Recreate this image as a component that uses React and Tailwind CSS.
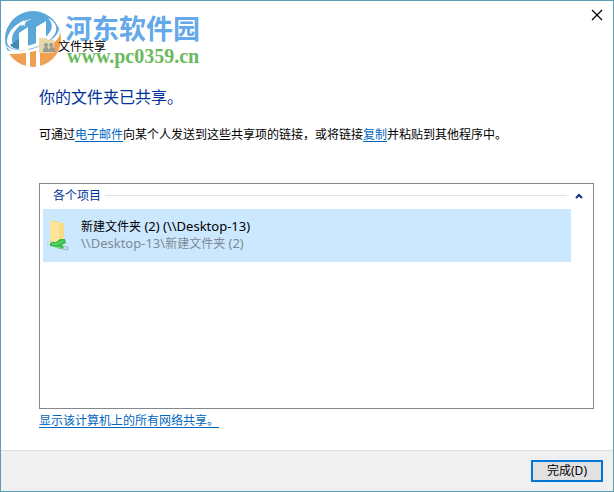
import React from 'react';

function Watermark() {
  return (
    <div className="pointer-events-none absolute left-px top-[7px] flex gap-[3px]">
      <svg className="size-[60px] shrink-0" viewBox="0 0 60 60" aria-hidden="true">
        <defs>
          <clipPath id="upper">
            <path d="M0 0H47C53 9 58 16 59 25C46 39 26 46 3 42Z" />
          </clipPath>
          <clipPath id="lower">
            <path d="M7 46C28 47 46 39 60 24V60H0Z" />
          </clipPath>
        </defs>
        <circle cx="31" cy="31" r="28" fill="#5aa7da" clipPath="url(#upper)" />
        <circle cx="31" cy="31" r="28" fill="#efa052" clipPath="url(#lower)" />
        <path d="M17 25 26 19V42H17ZM34 19 44 13V36H34Z" fill="#fff" />
        <path d="M24 44h4v16h-4zm10-3h4v19h-4z" fill="#fff" />
        <path d="M30 11C14 13 5 24 5 34C6 44 27 44 43 35C57 27 58 16 46 10C53 17 50 25 40 32C27 40 11 41 10 33C9 24 18 15 30 11Z" fill="#fff" />
        <path d="M4 37C11 45 30 44 46 34C54 29 57 24 57 20C61 30 51 36 42 40C26 47 6 46 4 37Z" fill="#fff" />
        <path d="M8 37 17 31V41Q11 41 8 37Z" fill="#3e88b8" />
        <path d="m21 12 1 2 2.4.3-1.8 1.6.5 2.3-2.1-1.2-2.1 1.2.5-2.3-1.8-1.6 2.4-.3Z" fill="#fff" />
        <path d="M37 30h7l2 2h6v13H37Z" fill="#e6d5a3" fillOpacity=".92" />
        <circle cx="44" cy="37" r="2" fill="#949996" />
        <circle cx="49" cy="37" r="2" fill="#949996" />
        <path d="M41 44q0-5 3-5t3 5zm6 0q0-5 3-5t3 5z" fill="#949996" />
      </svg>
      <div className="flex flex-col whitespace-nowrap pt-1">
        <span className="font-['Noto_Sans_CJK_SC',sans-serif] text-[27px] font-bold leading-8 text-[#65a9e8]">河东软件园</span>
        <span className="pl-0.5 font-['Liberation_Serif',serif] text-[20px] font-bold leading-6 text-[#6ab95b]">www.pc0359.cn</span>
      </div>
    </div>
  );
}

function FolderIcon() {
  return (
    <svg className="h-8 w-6 shrink-0" viewBox="0 0 24 32" aria-hidden="true">
      <path d="M3 2h8l1 2h5v21H3Z" fill="#f5d477" />
      <path d="M3 2l9 2v22l-9-3Z" fill="#ffe597" />
      <path d="M12 4h5v21h-5Z" fill="#f8dc88" />
      <path d="M0 23l5-1 3 2-3 2-5-1Z" fill="#e8eeee" stroke="#a9b6bb" strokeWidth=".5" />
      <path d="m15 27 6 1v3l-6-1Z" fill="#d5dde0" stroke="#89979d" strokeWidth=".6" />
      <path d="M3 24q3-2 6-1l4-3h5l1 4-4 2 2 3q-5 2-9-1l-5-1Z" fill="#35c04b" />
      <path d="m5 25 5 0 6-3M8 28l6 1" fill="none" stroke="#85dc8b" />
    </svg>
  );
}

const link = 'text-[#0066bf] underline underline-offset-2';

export default function App() {
  return (
    <div className="relative flex min-h-screen flex-col border border-[#5b9db3] bg-white font-['Noto_Sans','Noto_Sans_CJK_SC',sans-serif] text-[12px] leading-4 text-black">
      <Watermark />
      <header className="relative flex justify-between">
        <h1 className="pl-[57px] pt-[38px]">文件共享</h1>
        <button type="button" aria-label="关闭" className="mr-2.5 mt-2 flex size-3 items-center justify-center">
          <svg className="size-3" viewBox="0 0 12 12" aria-hidden="true">
            <path d="M1 1 11 11M11 1 1 11" fill="none" stroke="#000" strokeWidth="1.2" />
          </svg>
        </button>
      </header>

      <main className="flex flex-1 flex-col pl-[38px] pr-[19px]">
        <h2 className="mt-[30px] text-[16px] leading-6 text-[#003399]">你的文件夹已共享。</h2>
        <p className="mt-[18px]">
          可通过<a href="#mail" className={link}>电子邮件</a>向某个人发送到这些共享项的链接，或将链接<a href="#copy" className={link}>复制</a>并粘贴到其他程序中。
        </p>

        <section className="mt-10 flex flex-1 flex-col border border-[#828790] pl-[3px] pr-[22px]">
          <div className="-mr-4 flex h-[25px] items-center gap-1 pb-0.5 pl-2.5">
            <h3 className="text-[#003399]">各个项目</h3>
            <div className="h-px flex-1 bg-[#dfe2e8]" />
            <button type="button" aria-label="折叠" className="flex size-4 items-center justify-center">
              <svg className="size-2" viewBox="0 0 8 8" aria-hidden="true">
                <path d="M1 6 4 3 7 6" fill="none" stroke="#12317f" strokeWidth="2" />
              </svg>
            </button>
          </div>
          <div className="flex h-[53px] items-center gap-2.5 bg-[#cce8ff] pb-0.5 pl-1">
            <FolderIcon />
            <div className="whitespace-nowrap leading-[17px]">
              <p>新建文件夹<span className="text-[13px]"> (2) (\\Desktop-13)</span></p>
              <p className="text-[#7d8a94]"><span className="text-[13px]">\\Desktop-13\</span>新建文件夹<span className="text-[13px]"> (2)</span></p>
            </div>
          </div>
        </section>
        <p className="mb-[21px] mt-1">
          <a href="#shares" className={link}>显示该计算机上的所有网络共享。</a>
        </p>
      </main>

      <footer className="flex justify-end border-t border-[#dfdfdf] bg-[#f0f0f0] px-2.5 py-[9px]">
        <button type="button" className="flex h-[22px] w-[72px] items-center justify-center border-2 border-[#0078d7] bg-[#e1e1e1]">完成(D)</button>
      </footer>
    </div>
  );
}
